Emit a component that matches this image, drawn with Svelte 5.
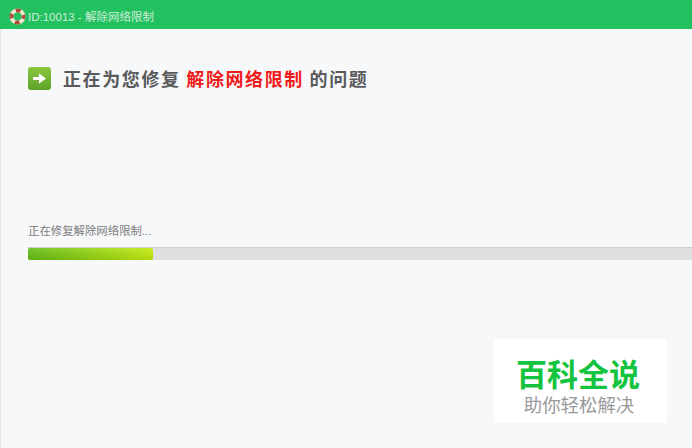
<script lang="ts">
  const segments = [
    { text: "正在为您修复 ", hot: false },
    { text: "解除网络限制", hot: true },
    { text: " 的问题", hot: false },
  ];
  const progress = 18.8;
</script>

<div class="window">
  <header class="titlebar">
    <svg class="buoy" width="17" height="17" viewBox="0 0 17 17">
      <circle cx="8.5" cy="8.5" r="6" fill="none" stroke="#f0e6d0" stroke-width="4" />
      <circle cx="8.5" cy="8.5" r="6" fill="none" stroke="#a9503c" stroke-width="4" stroke-dasharray="4.7 4.7" stroke-dashoffset="2.35" />
    </svg>
    <span class="title">ID:10013 - 解除网络限制</span>
  </header>

  <main class="body">
    <div class="heading">
      <span class="arrow">
        <svg width="15" height="15" viewBox="0 0 14 14">
          <path d="M1 5.500h5.500V2l6.500 5-6.500 5V8.500H1z" fill="#fff" />
        </svg>
      </span>
      <h1>
        {#each segments as s}
          <span class:hot={s.hot}>{s.text}</span>
        {/each}
      </h1>
    </div>

    <p class="status">正在修复解除网络限制...</p>
    <div class="track">
      <div class="fill" style="width: {progress}%"></div>
    </div>
  </main>

  <aside class="watermark">
    <strong>百科全说</strong>
    <span>助你轻松解决</span>
  </aside>
</div>

<style>
  :global(body) {
    margin: 0;
    background: #f6f8fa;
  }
  .window {
    position: relative;
    display: flex;
    flex-direction: column;
    width: 692px;
    height: 448px;
    overflow: hidden;
    background: #f6f8fa;
    font-family: "Liberation Sans", "Noto Sans CJK SC", sans-serif;
  }
  .titlebar {
    display: flex;
    align-items: center;
    gap: 2px;
    flex: none;
    height: 29px;
    padding: 3px 0 0 9px;
    box-sizing: border-box;
    background: #22c05f;
    color: #cdeed9;
    font-size: 11.5px;
  }
  .body {
    flex: 1;
    padding: 38px 0 0 27px;
    border-left: 1px solid #e2e4e6;
  }
  .heading {
    display: flex;
    align-items: center;
    gap: 12px;
  }
  .arrow {
    display: flex;
    align-items: center;
    justify-content: center;
    width: 23px;
    height: 23px;
    border-radius: 3px;
    background: linear-gradient(#8cc63f, #5fa32a);
  }
  h1 {
    margin: 0;
    font-family: "Noto Sans CJK SC", sans-serif;
    font-size: 18px;
    line-height: 23px;
    font-weight: 700;
    letter-spacing: 1.6px;
    color: #5a5a5a;
    white-space: pre;
  }
  .hot {
    color: #f01c1c;
  }
  .status {
    margin: 133px 0 0;
    font-size: 11.4px;
    line-height: 16px;
    color: #7d7d7d;
  }
  .track {
    margin-top: 8px;
    height: 13px;
    background: #dfdfdf;
    border-top: 1px solid #cfcfcf;
    box-sizing: border-box;
  }
  .fill {
    height: 12px;
    border-radius: 2px;
    background:
      linear-gradient(rgba(255, 255, 255, 0.12), rgba(0, 0, 0, 0.08)),
      linear-gradient(90deg, #62bb12, #c3ea0c);
  }
  .watermark {
    position: absolute;
    left: 494px;
    top: 339px;
    width: 173px;
    height: 84px;
    display: flex;
    flex-direction: column;
    align-items: center;
    background: #fff;
    font-family: "Noto Sans CJK SC", sans-serif;
  }
  .watermark strong {
    margin: 17px 5px 0 0;
    font-size: 31px;
    line-height: 34px;
    font-weight: 700;
    color: #14c33e;
  }
  .watermark span {
    margin: 2px 3px 0 0;
    font-size: 18.4px;
    line-height: 24px;
    color: #999;
  }
</style>
